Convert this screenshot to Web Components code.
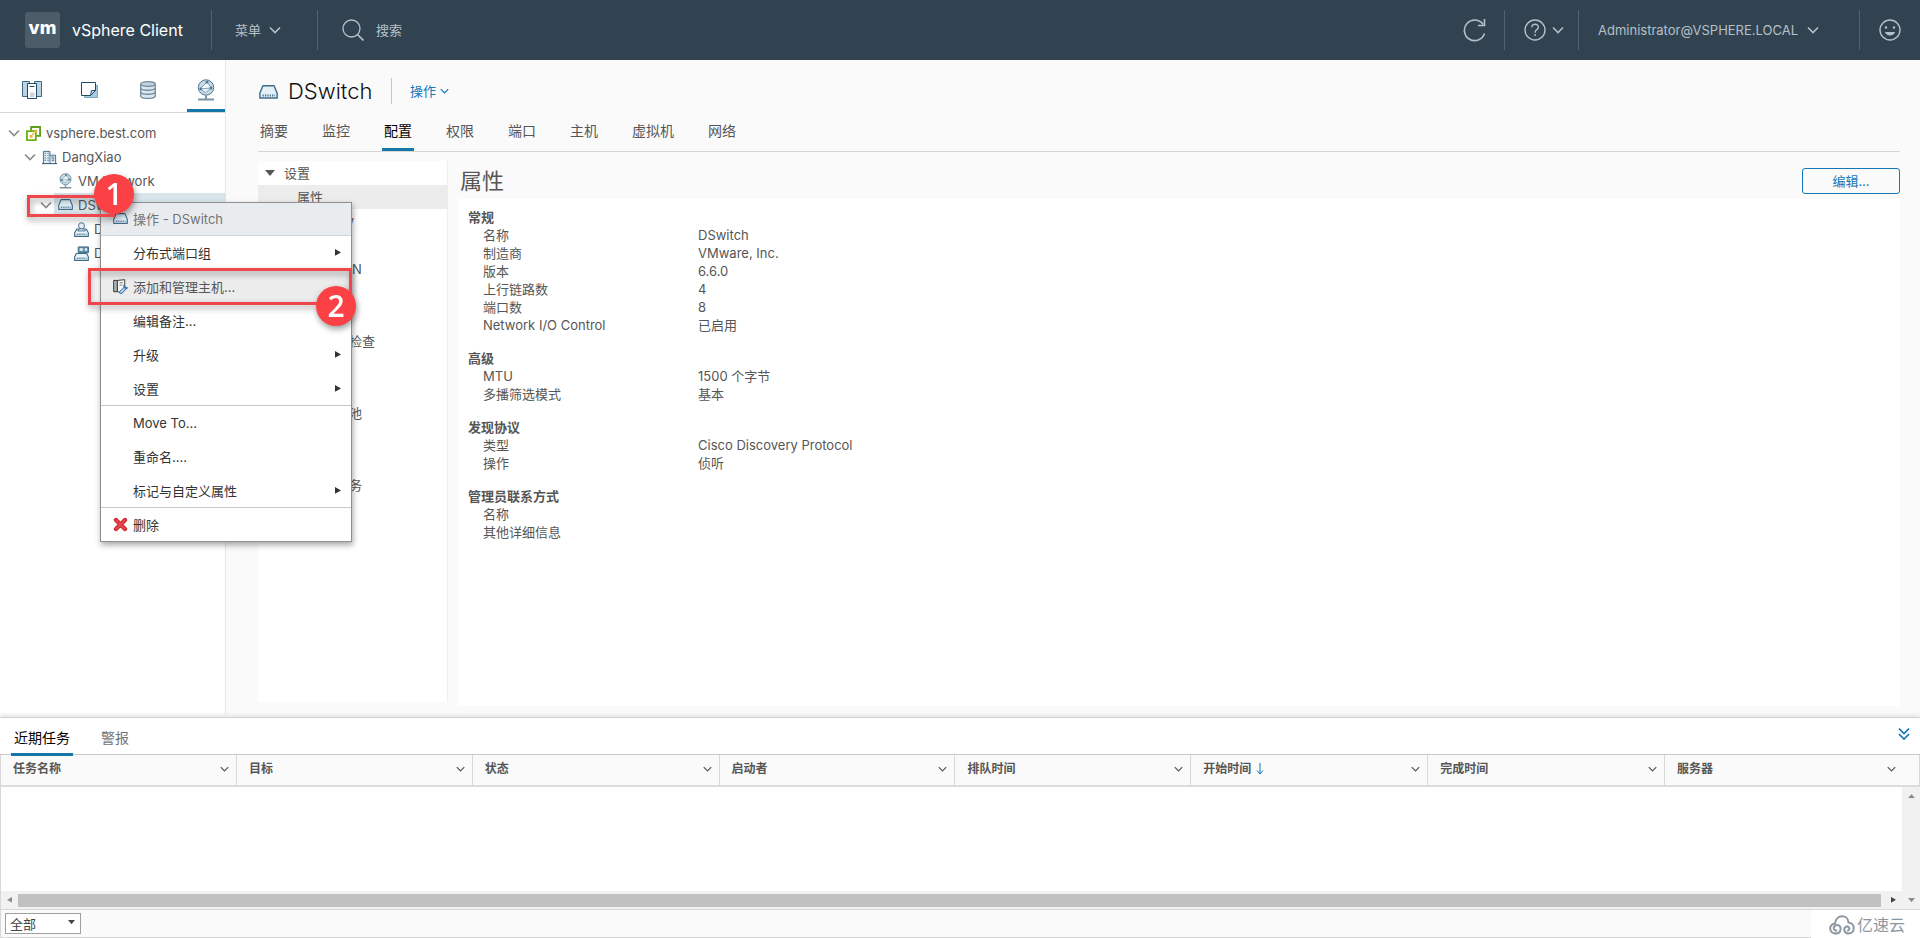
<!DOCTYPE html>
<html lang="zh-CN">
<head>
<meta charset="utf-8">
<title>vSphere Client - DSwitch</title>
<style>
  html, body { margin: 0; }
  body {
    font-family: Inter, "Noto Sans CJK SC", sans-serif;
    font-size: 13px; line-height: 18px; color: #565656; background: #fafafa;
  }
</style>
</head>
<body>
<vs-app></vs-app>
<script>
const BASE = `
  *, *::before, *::after { box-sizing: border-box; }
  button, input, select { font: inherit; color: inherit; margin: 0; padding: 0; border: 0; background: none; }
  a { color: inherit; text-decoration: none; }
  ul { list-style: none; margin: 0; padding: 0; }
  h1, h2, h3, dl, dd, dt { margin: 0; font-weight: inherit; font-size: inherit; }
`;
function define(tag, css, html, init) {
  const tpl = document.createElement('template');
  customElements.define(tag, class extends HTMLElement {
    constructor() {
      super();
      tpl.innerHTML = `<style>${BASE}${css}</style>${typeof html === 'function' ? html(this) : html}`;
      this.attachShadow({ mode: 'open' }).append(tpl.content.cloneNode(true));
      if (init) init(this, this.shadowRoot);
    }
  });
}

/* ---------- icons ---------- */
const B = '#3f6b87', F = '#cfe3f0';
const ICONS = {
  chevron: ['12 8', '<path d="M1 1.5l5 5 5-5" fill="none" stroke="currentColor" stroke-width="1.6"/>'],
  double: ['12 14', '<path d="M1 1.5l5 5 5-5M1 7l5 5 5-5" fill="none" stroke="currentColor" stroke-width="1.7"/>'],
  down: ['8 12', '<path d="M4 0v11M1 7.5L4 11l3-3.5" fill="none" stroke="currentColor"/>'],
  tri: ['10 6', '<path d="M0 0h10L5 6z" fill="currentColor"/>'],
  play: ['7 8', '<path d="M0 0l7 4-7 4z" fill="currentColor"/>'],
  search: ['22 22', '<g fill="none" stroke="currentColor" stroke-width="1.3"><circle cx="9.500" cy="9.500" r="8.500"/><path d="M15.500 15.500l6 6" stroke-width="1.700"/></g>'],
  refresh: ['24 24', '<g fill="none" stroke="currentColor" stroke-width="1.600"><path d="M21.500 15.500A10.300 10.300 0 1 1 20.200 6.500"/><path d="M21.500 1v6.500H15"/></g>'],
  help: ['22 22', '<g fill="none" stroke="currentColor" stroke-width="1.400"><circle cx="11" cy="11" r="10"/><path d="M7.800 8.300c.2-4.200 6.800-4 6.600-.2-.1 2.500-3.300 2.600-3.300 5.600"/></g><circle cx="11.100" cy="16" r=".9" fill="currentColor"/>'],
  smile: ['22 22', '<circle cx="11" cy="11" r="10" fill="none" stroke="currentColor" stroke-width="1.400"/><circle cx="7" cy="8.500" r="1.200" fill="currentColor"/><circle cx="15" cy="8.500" r="1.200" fill="currentColor"/><path d="M6 13h10c-1 4.500-9 4.500-10 0z" fill="currentColor"/>'],
  hosts: ['20 20', `<path d="M.5 1.500h7v15h-7zM12.500 1.500h7v15h-7z" fill="#bcd4e2" stroke="${B}"/><path d="M5.500 3.500h9v15h-9z" fill="#fff" stroke="#1f4a66"/><path d="M8 12.500h4.500V17H8z" fill="#ccd5da"/><path d="M7.500 6.500h5" stroke="#1f4a66"/>`],
  vms: ['18 18', `<path d="M3.500 4.500v12h13v-12z" fill="#a9cbdf" stroke="#7da5bf"/><path d="M.5 1.500h14v8l-5 5h-9z" fill="#fff" stroke="#1f4a66"/><path d="M14.500 9.500h-4l-1 5z" fill="${F}" stroke="#1f4a66"/>`],
  storage: ['16 18', `<path d="M.7 3v12c0 3.200 14.600 3.200 14.600 0V3" fill="#dbe7ee" stroke="#70899a" stroke-width="1.300"/><ellipse cx="8" cy="3" rx="7.300" ry="2.300" fill="#c3d3dd" stroke="#70899a" stroke-width="1.300"/><path d="M.7 7c0 3 14.600 3 14.600 0M.7 11c0 3 14.600 3 14.600 0" fill="none" stroke="#70899a" stroke-width="1.300"/>`],
  network: ['18 22', `<circle cx="9" cy="8.500" r="7.700" fill="#c6dae6" stroke="#4d7690"/><path d="M3 10l7-7 4.500 6-6 4.500z" fill="#eef5f9" stroke="#6d8fa4" stroke-width=".8"/><path d="M3 10l11.500-1" stroke="#6d8fa4" stroke-width=".8"/><circle cx="10" cy="3.200" r="1.400" fill="#4d7690"/><circle cx="14" cy="9" r="1.400" fill="#4d7690"/><circle cx="3.800" cy="9.800" r="1.400" fill="#4d7690"/><path d="M9 16.500v3M1 20.500h16" stroke="#7d94a3" stroke-width="2"/>`],
  vcenter: ['16 16', '<path d="M5.500 1h9.500v9.500H5.500z" fill="#fff" stroke="#5f9f1b" stroke-width="2"/><path d="M1 5.500h9.500V15H1z" fill="#fff" stroke="#6fb01e" stroke-width="2"/><path d="M4.500 6.500h5v5h-5z" fill="#fff"/><path d="M4 9.500h3v3H4zM9 4h3v3H9zM6.800 7.300h2v2h-2z" fill="#f0b323"/>'],
  datacenter: ['16 16', `<path d="M1.500 14.500V1.500h7v13M8.500 5.500h6v9" fill="#e3eff6" stroke="${B}"/><path d="M0 14.500h16" stroke="#1f4a66"/><path d="M3.500 3v10M6.500 3v10" stroke="${B}" stroke-width="1.500" stroke-dasharray="1 1.500"/><path d="M10 7.500h3M10 9.500h3M10 11.500h3" stroke="${B}"/>`],
  dvs: ['16 12', `<path d="M3.300.700h9.400L15.300 7v4H.7V7z" fill="#e3f0f8" stroke="${B}" stroke-linejoin="round" stroke-width="1.200"/><path d="M3 8.800h10.500" stroke="${B}" stroke-width="1.600" stroke-dasharray="1 1"/>`],
  portgroup: ['16 16', `<path d="M3 7.500h10l2.300 4v3.800H.7v-3.800z" fill="#e9f3f9" stroke="${B}" stroke-linejoin="round" stroke-width="1.200"/><path d="M3 13h10.500" stroke="${B}" stroke-width="1.600" stroke-dasharray="1 1"/><path d="M4 9.500c0-3 8-3 8 0z" fill="#fff" stroke="${B}"/><circle cx="8" cy="4" r="3.200" fill="#e9f3f9" stroke="${B}"/>`],
  uplink: ['16 16', `<path d="M2.500 8h11l1.800 3.500v3.800H.7v-3.800z" fill="#e9f3f9" stroke="${B}" stroke-linejoin="round" stroke-width="1.200"/><path d="M3 13h10.500" stroke="${B}" stroke-width="1.600" stroke-dasharray="1 1"/><path d="M4.500 1h11v6h-11z" fill="#5f8cab" stroke="${B}"/><path d="M6 2.500h3.500V5H6zM11.500 2.500h2.500V5h-2.500z" fill="#e9f3f9"/>`],
  addhost: ['16 16', '<path d="M.7 1.500h4v12h-4z" fill="#aab4bb" stroke="#333"/><path d="M4.700 1.500L12.500.700V8l-3 7-4.800-1.500z" fill="#f5f5f5" stroke="#333"/><path d="M7 4h3.500M7 6.500h3" stroke="#777"/><path d="M8.500 14.200l4.500-4.500" stroke="#3b73ad" stroke-width="3.600" stroke-linecap="round"/><path d="M8.500 14.200l4.500-4.500" stroke="#d8e8f6" stroke-width="1.600" stroke-linecap="round"/><path d="M12.500 6c-2 2.500 1 5.500 3.200 3" fill="none" stroke="#3b73ad" stroke-width="1.600"/>'],
  remove: ['14 14', '<path d="M2.800 2.800l8.400 8.400M11.200 2.800l-8.400 8.400" stroke="#c4282d" stroke-width="4" stroke-linecap="round"/><path d="M3 3l8 8M11 3l-8 8" stroke="#e8434a" stroke-width="2.200" stroke-linecap="round"/>'],
  cloud: ['26 20', '<g fill="none" stroke="currentColor" stroke-width="2" stroke-linecap="round"><path d="M6.500 18.500c-6.500 0-7.500-9.500-.5-10C7-1 19-1 19.500 7.500c7 .5 7 11 0 11-4 0-5.500-4.500-3-6.500 3-2 5.500 2 2.500 3.500"/><path d="M6.500 18.500c6 .5 7-8.500 1.500-8.500-4 0-4.500 6-.5 5.500"/></g>']
};
class VsIcon extends HTMLElement {
  constructor() { super(); this.attachShadow({ mode: 'open' }); }
  connectedCallback() {
    const [box, body] = ICONS[this.getAttribute('name')];
    this.shadowRoot.innerHTML = `<style>:host{display:inline-flex;flex:none}svg{display:block;width:var(--icon-w,${box.split(' ')[0]}px);height:auto}</style>
      <svg viewBox="0 0 ${box}" aria-hidden="true">${body}</svg>`;
  }
}
customElements.define('vs-icon', VsIcon);

/* ---------- header ---------- */
define('vs-header', `
  :host { display: flex; align-items: center; height: 60px; background: #314351; color: #b6c0c8; padding: 0 19px 0 25px; }
  .logo { display: grid; place-items: center; flex: none; width: 35px; height: 36px; border-radius: 3px; background: #4c5c69; color: #fff; font-size: 18px; font-weight: 800; line-height: 32px; padding-bottom: 4px; }
  .name { margin-left: 12px; width: 139px; flex: none; color: #fff; font-size: 16px; white-space: nowrap; }
  i { width: 1px; height: 40px; background: #52636f; flex: none; }
  button { display: flex; align-items: center; white-space: nowrap; flex: none; }
  .menu { margin: 0 36px 0 23px; gap: 8px; }
  label { display: flex; align-items: center; flex: 1; gap: 12px; margin-left: 24px; }
  input { width: 160px; outline: 0; }
  input::placeholder { color: #b6c0c8; opacity: 1; }
  .help { gap: 6px; margin: 0 14px 0 19px; }
  .user { gap: 7px; margin: 0 40px 0 19px; width: 221px; justify-content: space-between; }
  .refresh { margin-right: 17px; }
  .smile { margin-left: 19px; }
`, `
  <span class="logo">vm</span><span class="name">vSphere Client</span><i></i>
  <button class="menu">菜单 <vs-icon name="chevron"></vs-icon></button><i></i>
  <label><vs-icon name="search"></vs-icon><input type="search" placeholder="搜索" aria-label="搜索"></label>
  <button class="refresh" aria-label="刷新"><vs-icon name="refresh"></vs-icon></button><i></i>
  <button class="help" aria-label="帮助"><vs-icon name="help"></vs-icon><vs-icon name="chevron"></vs-icon></button><i></i>
  <button class="user">Administrator@VSPHERE.LOCAL <vs-icon name="chevron"></vs-icon></button><i></i>
  <button class="smile" aria-label="反馈"><vs-icon name="smile"></vs-icon></button>
`);

/* ---------- navigator ---------- */
define('vs-tree-item', `
  :host { display: block; --lv: 0; }
  a { display: flex; align-items: center; height: 24px; padding-left: calc(var(--lv) * 16px + 8px); color: #565656; white-space: nowrap; }
  .tw { width: 18px; display: flex; color: #8a8a8a; }
  .body { display: flex; align-items: center; gap: 5px; flex: 1; height: 24px; }
  .ic { width: 15px; display: flex; justify-content: center; --icon-w: 15px; }
  :host([icon=network]) .ic { --icon-w: 13px; }
  :host([selected]) .body { background: #d9e4ea; margin-left: -4px; padding-left: 4px; }
`, el => `<a href="#" role="treeitem"><span class="tw">${el.hasAttribute('open') ? '<vs-icon name="chevron"></vs-icon>' : ''}</span>
  <span class="body"><span class="ic"><vs-icon name="${el.getAttribute('icon')}"></vs-icon></span><slot></slot></span></a>`,
  el => el.shadowRoot.querySelector('a').style.setProperty('--lv', el.getAttribute('level')));

define('vs-navigator', `
  :host { display: block; width: 226px; flex: none; background: #fff; border-right: 1px solid #e6e6e6; }
  nav { display: flex; gap: 20px; height: 53px; padding-left: 13px; border-bottom: 1px solid #d5d5d5; }
  nav a { display: grid; place-items: center; width: 38px; padding-top: 10px; border-bottom: 3px solid transparent; }
  nav a.on { border-color: #1577a8; }
  .tree { padding-top: 8px; }
`, `
  <nav><a href="#" aria-label="主机和群集"><vs-icon name="hosts"></vs-icon></a><a href="#" aria-label="虚拟机和模板"><vs-icon name="vms"></vs-icon></a><a href="#" aria-label="存储"><vs-icon name="storage"></vs-icon></a><a href="#" class="on" aria-label="网络"><vs-icon name="network"></vs-icon></a></nav>
  <div class="tree" role="tree">
    <vs-tree-item level="0" icon="vcenter" open>vsphere.best.com</vs-tree-item>
    <vs-tree-item level="1" icon="datacenter" open>DangXiao</vs-tree-item>
    <vs-tree-item level="2" icon="network">VM Network</vs-tree-item>
    <vs-tree-item level="2" icon="dvs" open selected>DSwitch</vs-tree-item>
    <vs-tree-item level="3" icon="portgroup">DPortGroup</vs-tree-item>
    <vs-tree-item level="3" icon="uplink">DSwitch-DVUplinks</vs-tree-item>
  </div>
`);

/* ---------- object view ---------- */
define('vs-tab', `
  :host { display: flex; }
  a { padding: 0 2px; font-size: 14px; line-height: 38px; border-bottom: 3px solid transparent; white-space: nowrap; }
  :host([active]) a { color: #000; border-color: #1577a8; }
`, '<a href="#"><slot></slot></a>');

define('vs-config-nav', `
  :host { display: block; width: 190px; flex: none; background: #fff; border-right: 1px solid #eee; margin-bottom: 4px; }
  a { display: flex; align-items: center; height: 24px; padding-left: 39px; }
  a.group { padding-left: 7px; gap: 9px; }
  a.on { background: #ececec; }
`, () => [['设置', '属性', 'Topology', 'LACP', '专用 VLAN', 'NetFlow', '端口镜像', '运行状况检查'], ['资源分配', '系统流量', '网络资源池'], ['更多', '警报定义', '已调度任务']]
  .map(([g, ...items]) => `<a href="#" class="group"><vs-icon name="tri"></vs-icon>${g}</a><ul>` +
    items.map(t => `<li><a href="#"${t === '属性' ? ' class="on"' : ''}>${t}</a></li>`).join('') + '</ul>').join(''));

define('vs-prop-group', `
  :host { display: block; }
  h3 { font-weight: 700; line-height: 18px; }
  dl { display: grid; grid-template-columns: 215px 1fr; padding-left: 15px; grid-auto-rows: 18px; }
`, el => {
  const rows = el.getAttribute('rows').split('|').map(r => r.split('='));
  return `<h3><slot></slot></h3><dl>${rows.map(([k, v]) => `<dt>${k}</dt><dd>${v || ''}</dd>`).join('')}</dl>`;
});

define('vs-object-view', `
  :host { display: flex; flex-direction: column; flex: 1; min-width: 0; padding: 15px 20px 11px 32px; }
  header { display: flex; align-items: center; height: 31px; }
  header vs-icon[name=dvs] { --icon-w: 19px; padding: 4px 0 0 1px; }
  h1 { margin-left: 10px; width: 84px; font-size: 22px; font-weight: 300; line-height: 28px; color: #111; }
  header i { width: 1px; height: 26px; margin: 0 18px 0 19px; background: #c4c4c4; }
  header button { display: flex; align-items: center; gap: 4px; color: #1577b8; --icon-w: 9px; }
  .tabs { display: flex; gap: 30px; height: 46px; padding-top: 6px; border-bottom: 1px solid #d6d6d6; }
  .cols { display: flex; flex: 1; gap: 10px; padding-top: 9px; }
  section { display: flex; flex-direction: column; flex: 1; min-width: 0; }
  .head { display: flex; align-items: center; justify-content: space-between; height: 38px; padding: 2px 0 0 2px; }
  h2 { font-size: 22px; line-height: 30px; }
  .head button { width: 98px; height: 26px; border: 1px solid #1577b8; border-radius: 3px; color: #1577b8; }
  .panel { display: flex; flex-direction: column; gap: 15px; flex: 1; background: #fff; padding: 9px 10px; }
`, `
  <header><vs-icon name="dvs"></vs-icon><h1>DSwitch</h1><i></i><button>操作 <vs-icon name="chevron"></vs-icon></button></header>
  <nav class="tabs"><vs-tab>摘要</vs-tab><vs-tab>监控</vs-tab><vs-tab active>配置</vs-tab><vs-tab>权限</vs-tab><vs-tab>端口</vs-tab><vs-tab>主机</vs-tab><vs-tab>虚拟机</vs-tab><vs-tab>网络</vs-tab></nav>
  <div class="cols"><vs-config-nav></vs-config-nav>
    <section><div class="head"><h2>属性</h2><button>编辑...</button></div>
      <div class="panel">
        <vs-prop-group rows="名称=DSwitch|制造商=VMware, Inc.|版本=6.6.0|上行链路数=4|端口数=8|Network I/O Control=已启用">常规</vs-prop-group>
        <vs-prop-group rows="MTU=1500 个字节|多播筛选模式=基本">高级</vs-prop-group>
        <vs-prop-group rows="类型=Cisco Discovery Protocol|操作=侦听">发现协议</vs-prop-group>
        <vs-prop-group rows="名称|其他详细信息">管理员联系方式</vs-prop-group>
      </div></section></div>
`);

/* ---------- recent tasks ---------- */
const COLS = [['任务名称', 236], ['目标', 236], ['状态', 247], ['启动者', 236], ['排队时间', 236], ['开始时间', 237], ['完成时间', 237], ['服务器', 255]];
define('vs-tasks', `
  :host { display: block; position: relative; background: #fff; border-top: 1px solid #d0d0d0; box-shadow: 0 -3px 3px #ececec; }
  .bar { display: flex; align-items: stretch; gap: 25px; height: 37px; padding: 0 10px 0 11px; border-bottom: 1px solid #c8c8c8; }
  .bar a { padding: 0 3px; font-size: 14px; line-height: 40px; color: #737373; }
  .bar a.on { color: #000; border-bottom: 3px solid #1577a8; margin-bottom: -2px; }
  .bar button { margin-left: auto; color: #1577b8; }
  table { width: 100%; table-layout: fixed; border-collapse: separate; border-spacing: 0; background: #fafafa; border-left: 1px solid #d8d8d8; }
  th { height: 32px; padding: 0 7px 2px 12px; font-size: 12px; font-weight: 600; text-align: left; border-right: 1px solid #d8d8d8; border-bottom: 2px solid #dcdcdc; }
  th:last-child { padding-right: 23px; }
  th div { display: flex; align-items: center; gap: 5px; }
  th button { margin-left: auto; display: flex; --icon-w: 9px; }
  th .sort { color: #1577b8; }
  .view { display: grid; grid-template: 104px 18px / 1fr 18px; border-left: 1px solid #d8d8d8; color: #8c8c8c; }
  .vs { grid-area: 1 / 2 / 3 / 3; background: #f1f1f1; display: flex; flex-direction: column; justify-content: space-between; align-items: center; padding: 7px 0; --icon-w: 7px; }
  .vs vs-icon:first-child { transform: rotate(180deg); }
  .hs { grid-area: 2 / 1; background: #f1f1f1; display: flex; align-items: center; gap: 6px; padding: 0 6px; --icon-w: 5px; }
  .hs vs-icon:first-child { transform: rotate(180deg); }
  .hs vs-icon:last-child { color: #444; margin-left: 4px; }
  .hs span { flex: 1; height: 13px; background: #c1c1c1; }
  footer { display: flex; align-items: center; justify-content: space-between; height: 29px; background: #fafafa; border: solid #d8d8d8; border-width: 1px 0 1px 1px; padding-left: 4px; }
  .sel { position: relative; color: #444; }
  select { appearance: none; width: 76px; height: 21px; padding-left: 4px; line-height: 18px; border: 1px solid #a0a0a0; background: #fff; }
  .sel vs-icon { position: absolute; right: 6px; top: 7px; --icon-w: 7px; }
  .mark { display: flex; align-items: center; align-self: flex-start; gap: 2px; height: 28px; width: 109px; padding: 2px 0 0 18px; background: #fff; color: #8d97a3; font-size: 16px; line-height: 24px; }
`, () => `
  <nav class="bar"><a href="#" class="on">近期任务</a><a href="#">警报</a><button aria-label="折叠"><vs-icon name="double"></vs-icon></button></nav>
  <table><colgroup>${COLS.map(c => `<col style="width:${c[1] / 19.2}%">`).join('')}</colgroup>
    <thead><tr>${COLS.map(([t]) => `<th scope="col"><div><span>${t}</span>${t === '开始时间' ? '<vs-icon class="sort" name="down"></vs-icon>' : ''}<button aria-label="${t}筛选"><vs-icon name="chevron"></vs-icon></button></div></th>`).join('')}</tr></thead></table>
  <div class="view"><div class="vs"><vs-icon name="tri"></vs-icon><vs-icon name="tri"></vs-icon></div>
    <div class="hs"><vs-icon name="play"></vs-icon><span></span><vs-icon name="play"></vs-icon></div></div>
  <footer><label class="sel"><select aria-label="任务筛选"><option>全部</option></select><vs-icon name="tri"></vs-icon></label>
    <span class="mark"><vs-icon name="cloud"></vs-icon>亿速云</span></footer>
`);

/* ---------- context menu ---------- */
define('vs-menu-item', `
  :host { display: block; }
  button { display: flex; align-items: center; width: 100%; height: 33px; padding: 0 10px 0 12px; text-align: left; color: #333; }
  :host([hover]) button { background: #ececec; color: #565656; }
  .ic { display: flex; width: 15px; margin-right: 5px; justify-content: center; --icon-w: 15px; }
  .tx { flex: 1; }
  .sub { color: #333; --icon-w: 6px; display: flex; }
`, el => `<button role="menuitem"><span class="ic">${el.hasAttribute('icon') ? `<vs-icon name="${el.getAttribute('icon')}"></vs-icon>` : ''}</span><span class="tx"><slot></slot></span>${el.hasAttribute('sub') ? '<span class="sub"><vs-icon name="play"></vs-icon></span>' : ''}</button>`);

define('vs-context-menu', `
  :host { display: block; width: 252px; background: #fff; border: 1px solid #8f8f8f; box-shadow: 1px 3px 6px rgba(0,0,0,.35); }
  .title { display: flex; align-items: center; gap: 5px; height: 33px; padding-left: 12px; background: #e9ecef; border-bottom: 1px solid #cfd4d8; color: #737373; --icon-w: 15px; }
  .g { display: grid; gap: 1px; }
  .g + .g { border-top: 1px solid #c8c8c8; }
`, `
  <div class="title"><vs-icon name="dvs"></vs-icon>操作 - DSwitch</div>
  <div class="g"><vs-menu-item sub>分布式端口组</vs-menu-item><vs-menu-item icon="addhost" hover>添加和管理主机...</vs-menu-item><vs-menu-item>编辑备注...</vs-menu-item><vs-menu-item sub>升级</vs-menu-item><vs-menu-item sub>设置</vs-menu-item></div>
  <div class="g"><vs-menu-item>Move To...</vs-menu-item><vs-menu-item>重命名....</vs-menu-item><vs-menu-item sub>标记与自定义属性</vs-menu-item></div>
  <div class="g"><vs-menu-item icon="remove">删除</vs-menu-item></div>
`);

/* ---------- numbered callouts laid over the page ---------- */
define('vs-callout', `
  :host { display: block; border: 3px solid #ef464b; filter: drop-shadow(1px 3px 3px rgba(0,0,0,.4)); pointer-events: none; }
  span { position: absolute; display: grid; place-items: center; width: 40px; height: 40px; border-radius: 50%; background: #fb4145; color: #fff; font: 600 30px/40px "Open Sans", sans-serif; right: var(--bx); top: var(--by); }
`, '<span><slot></slot></span>');

define('vs-app', `
  :host { display: flex; flex-direction: column; min-height: 100vh; position: relative; }
  main { display: flex; flex: 1; }
  vs-context-menu { position: absolute; left: 100px; top: 202px; }
  vs-callout { position: absolute; }
  .one { left: 27px; top: 195px; width: 88px; height: 22px; --bx: -22px; --by: -24px; }
  .two { left: 88px; top: 268px; width: 264px; height: 37px; --bx: -7px; --by: 15px; }
`, `
  <vs-header></vs-header>
  <main><vs-navigator></vs-navigator><vs-object-view></vs-object-view></main>
  <vs-tasks></vs-tasks>
  <vs-context-menu></vs-context-menu>
  <vs-callout class="one">1</vs-callout>
  <vs-callout class="two">2</vs-callout>
`);
</script>
</body>
</html>
